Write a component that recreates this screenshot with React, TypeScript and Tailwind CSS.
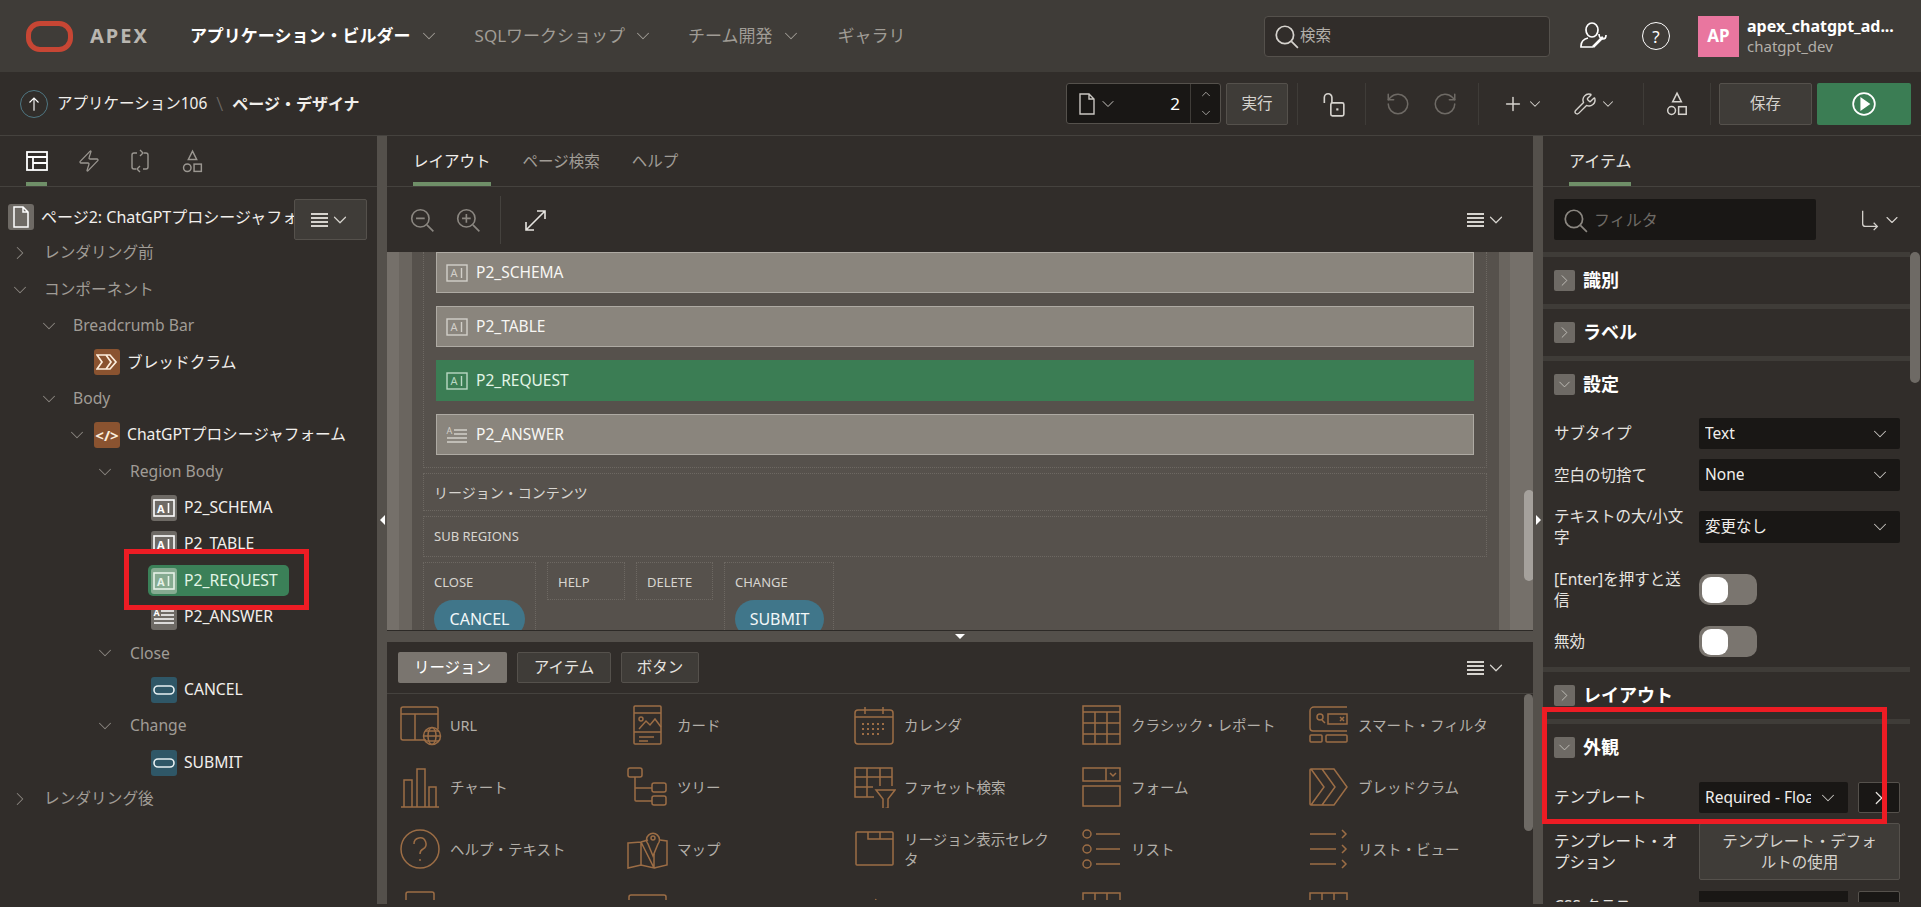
import type { ReactNode } from 'react';
import { ChevronDown, ChevronRight, ChevronUp, RotateCcw, RotateCw, Plus, Wrench, Zap } from 'lucide-react';

const brown = '#9c6d45';

function Svg({ children, size = 24, view = '0 0 24 24', stroke = 'currentColor', sw = 1.5, className = '' }: { children: ReactNode; size?: number; view?: string; stroke?: string; sw?: number; className?: string }) {
  return (
    <svg width={size} height={size} viewBox={view} fill="none" stroke={stroke} strokeWidth={sw} className={className}>
      {children}
    </svg>
  );
}

function SearchIcon({ className = '' }: { className?: string }) {
  return (
    <Svg size={26} className={className} sw={1.6}>
      <ellipse cx="11" cy="11" rx="8" ry="8" />
      <path d="M17 17l6 6" />
    </Svg>
  );
}

function MenuIcon() {
  return (
    <span className="flex items-center gap-[1px] text-[#d6d3ce]">
      <span className="flex w-[17px] flex-col gap-[2px]">
        <span className="h-[2px] bg-current" />
        <span className="h-[2px] bg-current" />
        <span className="h-[2px] bg-current" />
        <span className="h-[2px] bg-current" />
      </span>
      <ChevronDown size={22} strokeWidth={1.3} />
    </span>
  );
}

function ShapesIcon({ size = 26 }: { size?: number }) {
  return (
    <Svg size={size} sw={1.4}>
      <path d="M12 2l4 8H8z" />
      <circle cx="7" cy="18" r="3.6" />
      <rect x="13.5" y="14.5" width="7" height="7" />
    </Svg>
  );
}

function Divider() {
  return <span className="block h-[42px] w-px bg-[#3f3c38]" />;
}

function ItemGlyph({ light = false }: { light?: boolean }) {
  const c = light ? '#e6f2e8' : '#ffffff';
  return (
    <svg width="22" height="18" viewBox="0 0 22 18" fill="none" stroke={c} strokeWidth="1.6">
      <rect x="1" y="1" width="20" height="16" />
      <text x="4" y="13.5" fontSize="11" fontWeight="700" fill={c} stroke="none">A</text>
      <path d="M15.5 4v10" />
    </svg>
  );
}

function AreaGlyph() {
  return (
    <svg width="22" height="18" viewBox="0 0 22 18" fill="none" stroke="#fff" strokeWidth="1.5">
      <text x="0.5" y="8" fontSize="9" fontWeight="700" fill="#fff" stroke="none">A</text>
      <path d="M8 3h13M8 7h13M1 11h20M1 15h20" />
    </svg>
  );
}

function ButtonGlyph() {
  return (
    <svg width="22" height="10" viewBox="0 0 22 10" fill="none" stroke="#e8f1f3" strokeWidth="1.6">
      <rect x="1" y="1" width="20" height="8" rx="4" />
    </svg>
  );
}

function TreeBox({ className, children }: { className: string; children: ReactNode }) {
  return <span className={`flex h-[26px] w-[26px] shrink-0 items-center justify-center rounded-[3px] ${className}`}>{children}</span>;
}

function Twist({ open = true }: { open?: boolean }) {
  return (
    <span className="flex w-4 shrink-0 justify-center text-[#8b8781]">
      {open ? <ChevronDown size={22} strokeWidth={1.1} className="shrink-0" /> : <ChevronRight size={22} strokeWidth={1.1} className="shrink-0" />}
    </span>
  );
}

function Group({ label, className, gap, open = true }: { label: string; className: string; gap: string; open?: boolean }) {
  return (
    <div className={`flex h-[36.4px] items-center ${className} ${gap}`}>
      <Twist open={open} />
      <span className="text-[#a09c96]">{label}</span>
    </div>
  );
}

function Leaf({ label, glyph, box = 'bg-[#6e6a65]', pad = 'pl-[151px]' }: { label: string; glyph: ReactNode; box?: string; pad?: string }) {
  return (
    <div className={`flex h-[36.4px] items-center gap-[7px] ${pad}`}>
      <TreeBox className={box}>{glyph}</TreeBox>
      <span className="text-[#f1efec]">{label}</span>
    </div>
  );
}

function LeftPanel() {
  return (
    <aside className="flex w-[377px] shrink-0 flex-col overflow-hidden">
      <div className="flex h-[51px] shrink-0 items-center border-b border-[#45423e] pl-[26px]">
        <div className="flex h-full w-[51px] flex-col items-start pt-[15px]">
          <svg width="22" height="20" viewBox="0 0 22 20" fill="none" stroke="#fff" strokeWidth="1.8">
            <rect x="1" y="1" width="20" height="18" />
            <path d="M1 6h20M7 6v13M7 12h14" />
          </svg>
          <span className="mt-auto h-[4px] w-[21px] bg-[#6f8f68]" />
        </div>
        <div className="flex h-full w-[51px] items-center text-[#9b9791]">
          <Zap size={24} strokeWidth={1.3} />
        </div>
        <div className="flex h-full w-[52px] items-center text-[#9b9791]">
          <Svg size={24} sw={1.4}>
            <path d="M9 4H6a2 2 0 0 0-2 2v12a2 2 0 0 0 2 2h2M15 20h3a2 2 0 0 0 2-2V6a2 2 0 0 0-2-2h-2" />
            <path d="M12 1l3 3-3 3M12 17l-3 3 3 3" />
          </Svg>
        </div>
        <div className="flex h-full items-center text-[#9b9791]">
          <ShapesIcon size={25} />
        </div>
      </div>

      <div className="relative flex h-[48px] shrink-0 items-center pl-[8px] pt-[12px]">
        <span className="flex h-[26px] w-[26px] items-center justify-center rounded-[3px] bg-[#6e6a65]">
          <svg width="16" height="22" viewBox="0 0 16 22" fill="none" stroke="#fff" strokeWidth="1.5">
            <path d="M1 1h9l5 5v15H1zM10 1v5h5" />
          </svg>
        </span>
        <span className="ml-[7px] w-[253px] overflow-hidden whitespace-nowrap text-[16px] text-[#f1efec]">ページ2: ChatGPTプロシージャフォーム</span>
        <span className="absolute left-[294px] top-[12px] flex h-[41px] w-[73px] items-center justify-center rounded-[2px] border border-[#55514c] bg-[#3f3c38]">
          <MenuIcon />
        </span>
      </div>

      <div className="text-[15.7px] leading-none">
        <Group label="レンダリング前" open={false} className="pl-[12px]" gap="gap-[16px]" />
        <Group label="コンポーネント" className="pl-[12px]" gap="gap-[16px]" />
        <Group label="Breadcrumb Bar" className="pl-[41px]" gap="gap-[16px]" />
        <Leaf
          label="ブレッドクラム"
          pad="pl-[94px]"
          box="bg-[#8a5330]"
          glyph={
            <svg width="22" height="16" viewBox="0 0 22 16" fill="none" stroke="#fdeedd" strokeWidth="1.7">
              <path d="M1 1h9l5 7-5 7H1l5-7zM10 1h4l6 7-6 7h-4" />
            </svg>
          }
        />
        <Group label="Body" className="pl-[41px]" gap="gap-[16px]" />
        <div className="flex h-[36.4px] items-center pl-[69px]">
          <Twist />
          <TreeBox className="ml-[9px] bg-[#8a5330]">
            <span className="text-[15px] font-bold leading-none text-[#fdeedd]">&lt;/&gt;</span>
          </TreeBox>
          <span className="ml-[7px] text-[#f1efec]">ChatGPTプロシージャフォーム</span>
        </div>
        <Group label="Region Body" className="pl-[97px]" gap="gap-[17px]" />
        <Leaf label="P2_SCHEMA" glyph={<ItemGlyph />} />
        <Leaf label="P2_TABLE" glyph={<ItemGlyph />} />
        <div className="relative flex h-[36.4px] items-center pl-[148px]">
          <span className="absolute left-[124px] top-[-14px] h-[61px] w-[185px] border-[5px] border-[#ed1c24] bg-[#312d2a]" />
          <span className="relative flex h-[31px] w-[141px] items-center gap-[7px] rounded-[5px] bg-[#3b8058] pl-[3px]">
            <span className="flex h-[26px] w-[26px] items-center justify-center rounded-[3px] bg-[#86ab91]">
              <ItemGlyph light />
            </span>
            <span className="text-[#e2f5e6]">P2_REQUEST</span>
          </span>
        </div>
        <Leaf label="P2_ANSWER" glyph={<AreaGlyph />} />
        <Group label="Close" className="pl-[97px]" gap="gap-[17px]" />
        <Leaf label="CANCEL" box="bg-[#2f5767]" glyph={<ButtonGlyph />} />
        <Group label="Change" className="pl-[97px]" gap="gap-[17px]" />
        <Leaf label="SUBMIT" box="bg-[#2f5767]" glyph={<ButtonGlyph />} />
        <Group label="レンダリング後" open={false} className="pl-[12px]" gap="gap-[16px]" />
      </div>
    </aside>
  );
}

function Splitter({ dir }: { dir: 'left' | 'right' }) {
  return (
    <div className="flex w-[10px] shrink-0 items-start justify-center bg-[#54504b] pt-[379px]">
      {dir === 'left' ? (
        <span className="h-0 w-0 border-y-[5px] border-r-[5px] border-y-transparent border-r-white" />
      ) : (
        <span className="h-0 w-0 border-y-[5px] border-l-[5px] border-y-transparent border-l-white" />
      )}
    </div>
  );
}

function FormRow({ name, glyph, active = false }: { name: string; glyph: ReactNode; active?: boolean }) {
  return (
    <div
      className={
        active
          ? 'flex h-[41px] items-center gap-[8px] bg-[#3b7d54] pl-[10px] text-[15.5px] text-[#e2f5e6]'
          : 'flex h-[41px] items-center gap-[8px] border border-[#aeaaa3] bg-[#8a857d] pl-[9px] text-[15.5px] text-[#f7f6f3]'
      }
    >
      {glyph}
      <span>{name}</span>
    </div>
  );
}

function ItemMark({ color }: { color: string }) {
  return (
    <svg width="22" height="18" viewBox="0 0 22 18" fill="none" stroke={color} strokeWidth="1.4">
      <rect x="1" y="1" width="20" height="16" />
      <text x="4.5" y="13" fontSize="11" fill={color} stroke="none">A</text>
      <path d="M15.5 4v10" />
    </svg>
  );
}

function SlotBox({ label, className, children }: { label: string; className: string; children?: ReactNode }) {
  return (
    <div className={`shrink-0 border border-dotted border-[#6d6862] pl-[10px] ${className}`}>
      <div className="mt-[10px] text-[13px] leading-[18px] text-[#d8d5d0]">{label}</div>
      {children}
    </div>
  );
}

function CanvasPill({ label, className }: { label: string; className: string }) {
  return <div className={`mt-[9px] flex h-[38px] items-center justify-center rounded-full bg-[#40768a] text-[16px] text-[#f2f7f8] ${className}`}>{label}</div>;
}

function Canvas() {
  return (
    <div className="relative flex h-[378px] shrink-0 overflow-hidden bg-[#56514c]">
      <div className="flex w-[25px] shrink-0">
        <span className="w-[12px] bg-[#75706a]" />
        <span className="w-[13px] bg-[#6a655f]" />
      </div>
      <div className="min-w-0 flex-1 pl-[11px] pr-[12px]">
        <div className="border-x border-b border-dotted border-[#6d6862] px-[12px] pb-[12px]">
          <div className="flex flex-col gap-[13px]">
            <FormRow name="P2_SCHEMA" glyph={<ItemMark color="#d2cfc9" />} />
            <FormRow name="P2_TABLE" glyph={<ItemMark color="#d2cfc9" />} />
            <FormRow name="P2_REQUEST" active glyph={<ItemMark color="#b9d8c3" />} />
            <FormRow
              name="P2_ANSWER"
              glyph={
                <svg width="22" height="18" viewBox="0 0 22 18" fill="none" stroke="#d2cfc9" strokeWidth="1.4">
                  <text x="0.5" y="8" fontSize="9" fill="#d2cfc9" stroke="none">A</text>
                  <path d="M8 4h13M8 8h13M1 12h20M1 16h20" />
                </svg>
              }
            />
          </div>
        </div>
        <div className="mt-[5px] flex h-[38px] items-center border border-dotted border-[#6d6862] pl-[10px] text-[14px] text-[#d8d5d0]">リージョン・コンテンツ</div>
        <div className="mt-[5px] flex h-[41px] items-center border border-dotted border-[#6d6862] pl-[10px] text-[13px] text-[#d8d5d0]">SUB REGIONS</div>
        <div className="mt-[5px] flex items-start">
          <SlotBox label="CLOSE" className="h-[80px] w-[113px]">
            <CanvasPill label="CANCEL" className="w-[91px]" />
          </SlotBox>
          <SlotBox label="HELP" className="ml-[11px] h-[38px] w-[78px]" />
          <SlotBox label="DELETE" className="ml-[11px] h-[38px] w-[77px]" />
          <SlotBox label="CHANGE" className="ml-[11px] h-[80px] w-[110px]">
            <CanvasPill label="SUBMIT" className="w-[89px]" />
          </SlotBox>
        </div>
      </div>
      <div className="flex w-[34px] shrink-0">
        <span className="w-[11px] bg-[#6a655f]" />
        <span className="w-[23px] bg-[#75706a]" />
      </div>
      <span className="absolute left-[1137px] top-[238px] h-[91px] w-[10px] rounded-full bg-[#a5a19c]" />
    </div>
  );
}

const g = { stroke: brown, strokeWidth: 1.5, fill: 'none' };

function Glyph({ children }: { children: ReactNode }) {
  return (
    <svg width="42" height="42" viewBox="0 0 42 42" {...g} className="shrink-0">
      {children}
    </svg>
  );
}

const gallery: { label?: string; icon: ReactNode }[] = [
  { label: 'URL', icon: <Glyph><path d="M26 36H3a2 2 0 0 1-2-2V5a2 2 0 0 1 2-2h33a2 2 0 0 1 2 2v20M1 10h37M15 10v26" /><circle cx="32" cy="32" r="8.5" /><ellipse cx="32" cy="32" rx="4" ry="8.5" /><path d="M23.5 32h17M25 27h14M25 37h14" /></Glyph> },
  { label: 'カード', icon: <Glyph><rect x="7" y="2" width="27" height="38" rx="1" /><path d="M7 9h27M7 28h27M12 33h15M12 37h9M12 25l7-8 4 4 5-6 6 8" /><circle cx="14" cy="15" r="2" /></Glyph> },
  { label: 'カレンダ', icon: <Glyph><rect x="1" y="6" width="38" height="34" rx="3" /><path d="M1 13h38M11 3v7M29 3v7" /><path d="M8 20h24M8 25h24M8 30h18" strokeDasharray="2 3" strokeWidth="2" /></Glyph> },
  { label: 'クラシック・レポート', icon: <Glyph><rect x="2" y="2" width="37" height="38" /><path d="M2 8h37M2 19h37M2 30h37M14 8v32M26 8v32" /></Glyph> },
  { label: 'スマート・フィルタ', icon: <Glyph><path d="M39 3H6a4 4 0 0 0-4 4v17a3 3 0 0 0 3 3h34" /><circle cx="12" cy="13" r="3" /><path d="M14 16l3 3" /><rect x="20" y="10" width="19" height="10" /><path d="M32 13l4 4m0-4l-4 4" /><rect x="2" y="31" width="12" height="7" rx="1" /><rect x="18" y="31" width="21" height="7" rx="1" /></Glyph> },
  { label: 'チャート', icon: <Glyph><path d="M1 41h38M4 41V14h8v27M17 41V3h8v38M29 41V21h7v20" /></Glyph> },
  { label: 'ツリー', icon: <Glyph><rect x="1" y="2" width="14" height="9" rx="2" /><rect x="25" y="17" width="14" height="9" rx="2" /><rect x="25" y="30" width="14" height="9" rx="2" /><path d="M8 11v23a1 1 0 0 0 1 1h16M8 22h17" /></Glyph> },
  { label: 'ファセット検索', icon: <Glyph><path d="M20 31H1V2h37v18M1 11h37M1 21h18M13 2v29M26 2v18M22 24h19L34 33v9l-5 1V33z" /></Glyph> },
  { label: 'フォーム', icon: <Glyph><rect x="2" y="2" width="37" height="13" /><path d="M25 2v13M29 7l3 3 3-3" /><rect x="2" y="20" width="37" height="20" /></Glyph> },
  { label: 'ブレッドクラム', icon: <Glyph><path d="M3 3h23l13 18-13 18H3a1 1 0 0 1-1-1V4a1 1 0 0 1 1-1zM3 3l13 18L3 39M14 3l13 18-13 18" /></Glyph> },
  { label: 'ヘルプ・テキスト', icon: <Glyph><circle cx="20" cy="21" r="19" /><path d="M14 16a6 6 0 1 1 9 5c-2 1-3 3-3 5" /><path d="M20 31v2" /></Glyph> },
  { label: 'マップ', icon: <Glyph><path d="M1 15l13-1 13 26L14 37 1 40zM14 14v23M27 40V26M27 40l13-3V13l-7-1M21 12l-7 2" /><path d="M26 28l-5-12a6.500 6.500 0 1 1 10 0z" /><circle cx="26" cy="10" r="2" /></Glyph> },
  { label: 'リージョン表示セレクタ', icon: <Glyph><rect x="2" y="4" width="37" height="33" rx="1" /><path d="M14 4v7h25M26 4v7" /></Glyph> },
  { label: 'リスト', icon: <Glyph><circle cx="6" cy="6" r="4" /><circle cx="6" cy="21" r="4" /><circle cx="6" cy="36" r="4" /><path d="M15 6h24M15 21h24M15 36h24" /></Glyph> },
  { label: 'リスト・ビュー', icon: <Glyph><path d="M2 6h26M2 21h26M2 36h26M34 2l4 4-4 4M34 17l4 4-4 4M34 32l4 4-4 4" /></Glyph> },
  { icon: <Glyph><path d="M6 20V4a2 2 0 0 1 2-2h24a2 2 0 0 1 2 2v16" /></Glyph> },
  { icon: <Glyph><path d="M2 20V7a2 2 0 0 1 2-2h33a2 2 0 0 1 2 2v13" /></Glyph> },
  { icon: <Glyph><path d="M20 14l2-5" /></Glyph> },
  { icon: <Glyph><path d="M2 20V3h37v17M14 3v17M26 3v17" /></Glyph> },
  { icon: <Glyph><path d="M2 20V3h37v17M14 3v17M26 3v17" /></Glyph> },
];

function Center() {
  return (
    <main className="flex w-[1146px] shrink-0 flex-col">
      <div className="flex h-[51px] shrink-0 items-stretch gap-[32px] border-b border-[#45423e] pl-[26px] text-[15.5px] text-[#a09c96]">
        <span className="flex items-center border-b-[4px] border-[#6f8f68] pt-[6px] text-[#f1efec]">レイアウト</span>
        <span className="flex items-center pt-[2px]">ページ検索</span>
        <span className="flex items-center pt-[2px]">ヘルプ</span>
      </div>
      <div className="flex h-[65px] shrink-0 items-center pl-[22px] pr-[26px] text-[#8b8781]">
        <Svg size={26} sw={1.5}>
          <circle cx="10.500" cy="10.500" r="8" />
          <path d="M6.500 10.500h8M16.500 16.500l6 6" />
        </Svg>
        <span className="ml-[20px]">
          <Svg size={26} sw={1.5}>
            <circle cx="10.500" cy="10.500" r="8" />
            <path d="M6.500 10.500h8M10.500 6.500v8M16.500 16.500l6 6" />
          </Svg>
        </span>
        <span className="ml-[19px] h-[48px] w-px bg-[#45423e]" />
        <span className="ml-[22px] text-[#e6e4e0]">
          <Svg size={24} sw={1.6}>
            <path d="M14 3h8v8M22 3L3 22M3 14v8h8" />
          </Svg>
        </span>
        <span className="ml-auto"><MenuIcon /></span>
      </div>
      <Canvas />
      <div className="relative flex h-[12px] shrink-0 justify-center border-t border-[#2d2a27] bg-[#54504b] pt-[3px]">
        <span className="h-0 w-0 border-x-[5px] border-t-[5px] border-x-transparent border-t-white" />
      </div>
      <div className="flex h-[52px] shrink-0 items-center gap-[10px] border-b border-[#45423e] pl-[11px] pr-[26px] text-[15.5px] text-[#e6e4e0]">
        <span className="flex h-[31px] w-[109px] items-center justify-center rounded-[2px] bg-[#7a756f] text-white">リージョン</span>
        <span className="flex h-[31px] w-[94px] items-center justify-center rounded-[2px] border border-[#55514c] bg-[#3f3c38]">アイテム</span>
        <span className="flex h-[31px] w-[78px] items-center justify-center rounded-[2px] border border-[#55514c] bg-[#3f3c38]">ボタン</span>
        <span className="ml-auto"><MenuIcon /></span>
      </div>
      <div className="flex min-h-0 flex-1">
        <div className="grid h-[206px] w-[1137px] grid-cols-[227px_227px_227px_227px_1fr] auto-rows-[62px] overflow-hidden pl-[13px]">
          {gallery.map((item, i) => (
            <div key={i} className="flex items-center gap-[8px] text-[14.5px] leading-[20px] text-[#b3afa9]">
              {item.icon}
              {item.label && <span className="max-w-[150px]">{item.label}</span>}
            </div>
          ))}
        </div>
        <div className="w-[9px] shrink-0">
          <div className="h-[137px] rounded-full bg-[#6e6a65]" />
        </div>
      </div>
    </main>
  );
}

function SectionHead({ title, open = false }: { title: string; open?: boolean }) {
  return (
    <div className="flex h-[47px] items-center gap-[8px] pl-[11px]">
      <span className="flex h-[21px] w-[21px] items-center justify-center rounded-[2px] bg-[#6e6a65] text-[#c9c6c1]">
        {open ? <ChevronDown size={19} strokeWidth={1.1} /> : <ChevronRight size={19} strokeWidth={1.1} />}
      </span>
      <span className="text-[18px] font-bold text-white">{title}</span>
    </div>
  );
}

function Strip() {
  return <div className="h-[5px] bg-[#3f3c38]" />;
}

function Prop({ label, mt, h, children }: { label: string; mt: string; h: string; children: ReactNode }) {
  return (
    <div className={`flex items-center pl-[11px] ${mt} ${h}`}>
      <span className="w-[145px] shrink-0 pr-[9px] text-[15.5px] leading-[21px] text-[#e6e4e0]">{label}</span>
      {children}
    </div>
  );
}

function Select({ value, className = 'w-[201px]' }: { value: string; className?: string }) {
  return (
    <span className={`flex h-full items-center justify-between rounded-[2px] bg-[#191715] pl-[6px] pr-[9px] text-[15.5px] text-[#f1efec] ${className}`}>
      <span className="overflow-hidden whitespace-nowrap">{value}</span>
      <ChevronDown size={22} strokeWidth={1.1} className="ml-[6px] shrink-0 text-[#c9c6c1]" />
    </span>
  );
}

function Toggle() {
  return (
    <span className="flex h-full w-[58px] items-center rounded-[10px] bg-[#7a756f] pl-[3px]">
      <span className="h-[26px] w-[26px] rounded-[9px] bg-white" />
    </span>
  );
}

function RightPanel() {
  return (
    <aside className="flex w-[377px] shrink-0 flex-col">
      <div className="flex h-[51px] shrink-0 items-stretch border-b border-[#45423e] pl-[26px] text-[16px] text-[#e6e4e0]">
        <span className="flex items-center border-b-[4px] border-[#6f8f68] pt-[4px]">アイテム</span>
      </div>
      <div className="flex h-[65px] shrink-0 items-center pl-[11px] pr-[18px]">
        <span className="flex h-[41px] w-[262px] items-center gap-[6px] rounded-[2px] bg-[#191715] pl-[8px] text-[16px] text-[#6e6a65]">
          <SearchIcon className="text-[#8b8781]" />
          フィルタ
        </span>
        <span className="ml-auto flex items-center gap-[1px] text-[#d6d3ce]">
          <Svg size={22} sw={1.4}>
            <path d="M4 2v14a3 3 0 0 0 3 3h13M16 15l4 4-4 4" />
          </Svg>
          <ChevronDown size={20} strokeWidth={1.3} />
        </span>
      </div>
      <div className="flex min-h-0 flex-1">
        <div className="h-[650px] w-[367px] shrink-0 overflow-hidden">
          <Strip />
          <SectionHead title="識別" />
          <Strip />
          <SectionHead title="ラベル" />
          <Strip />
          <SectionHead title="設定" open />
          <Prop label="サブタイプ" mt="mt-[10px]" h="h-[31px]"><Select value="Text" /></Prop>
          <Prop label="空白の切捨て" mt="mt-[10px]" h="h-[32px]"><Select value="None" /></Prop>
          <Prop label="テキストの大/小文字" mt="mt-[20px]" h="h-[32px]"><Select value="変更なし" /></Prop>
          <Prop label="[Enter]を押すと送信" mt="mt-[31px]" h="h-[31px]"><Toggle /></Prop>
          <Prop label="無効" mt="mt-[21px]" h="h-[31px]"><Toggle /></Prop>
          <div className="h-[10px]" />
          <Strip />
          <SectionHead title="レイアウト" />
          <Strip />
          <SectionHead title="外観" open />
          <Prop label="テンプレート" mt="mt-[11px]" h="h-[31px]">
            <Select value="Required - Floating" className="w-[149px]" />
            <span className="ml-[10px] flex h-full w-[42px] items-center justify-center rounded-[2px] border border-[#55514c] bg-[#191715] text-[#e6e4e0]">
              <ChevronRight size={22} strokeWidth={1.3} />
            </span>
          </Prop>
          <Prop label="テンプレート・オプション" mt="mt-[10px]" h="h-[57px]">
            <span className="flex h-full w-[201px] items-center justify-center rounded-[2px] border border-[#55514c] bg-[#3f3c38] px-[16px] text-center text-[15.5px] leading-[21px] text-[#d6d3ce]">テンプレート・デフォルトの使用</span>
          </Prop>
          <Prop label="CSS クラス" mt="mt-[11px]" h="h-[31px]">
            <span className="h-full w-[149px] bg-[#191715]" />
            <span className="ml-[10px] h-full w-[42px] rounded-[2px] border border-[#55514c] bg-[#191715]" />
          </Prop>
        </div>
        <div className="w-[10px] shrink-0">
          <div className="h-[131px] rounded-full bg-[#6e6a65]" />
        </div>
      </div>
    </aside>
  );
}

function TopBar() {
  return (
    <header className="flex h-[72px] shrink-0 items-center bg-[#3f3c38] pl-[26px]">
      <span className="h-[31px] w-[47px] rounded-[14px] border-[5px] border-[#c74634]" />
      <span className="ml-[17px] text-[20px] font-bold tracking-[2px] text-[#b9b6b0]">APEX</span>
      <span className="ml-[41px] text-[17px] font-bold text-white">アプリケーション・ビルダー</span>
      <ChevronDown size={22} strokeWidth={1.1} className="ml-[7px] text-[#a09c96]" />
      <span className="ml-[35px] text-[17px] text-[#a09c96]">SQLワークショップ</span>
      <ChevronDown size={22} strokeWidth={1.1} className="ml-[7px] text-[#a09c96]" />
      <span className="ml-[34px] text-[17px] text-[#a09c96]">チーム開発</span>
      <ChevronDown size={22} strokeWidth={1.1} className="ml-[7px] text-[#a09c96]" />
      <span className="ml-[36px] text-[17px] text-[#a09c96]">ギャラリ</span>

      <span className="ml-auto flex h-[41px] w-[286px] items-center gap-[1px] rounded-[4px] border border-[#55514c] bg-[#312d2a] pl-[8px] text-[15.5px] text-[#b3afa9]">
        <SearchIcon className="text-[#d6d3ce]" />
        検索
      </span>
      <span className="ml-[28px] text-white">
        <Svg size={30} view="0 0 30 30" sw={1.7}>
          <ellipse cx="14" cy="9" rx="6" ry="7" />
          <path d="M10 17c-4 1-7 4-7 8v1h12" />
          <path d="M15 26l10-10" strokeWidth="2.6" />
          <path d="M21 13c0 3 2 5 4 5 2 0 3-2 3-4" />
        </Svg>
      </span>
      <span className="ml-[34px] flex h-[28px] w-[28px] items-center justify-center rounded-full border-[1.8px] border-white text-[17px] leading-none text-white">?</span>
      <span className="ml-[28px] flex h-[41px] w-[41px] items-center justify-center bg-[#e9769f] text-[17px] font-bold text-white">AP</span>
      <span className="ml-[8px] flex w-[174px] flex-col text-[15px] leading-[20px]">
        <span className="text-[16px] font-bold text-white">apex_chatgpt_ad...</span>
        <span className="text-[#b3afa9]">chatgpt_dev</span>
      </span>
    </header>
  );
}

function ToolBar() {
  return (
    <div className="flex h-[64px] shrink-0 items-center border-b border-[#45423e] pl-[20px] pr-[10px]">
      <span className="flex h-[28px] w-[28px] items-center justify-center rounded-full border border-[#4f7783] text-white">
        <Svg size={18} sw={1.5}><path d="M12 21V4M6 10l6-6 6 6" /></Svg>
      </span>
      <span className="ml-[9px] text-[15.5px] text-[#f1efec]">アプリケーション106</span>
      <span className="ml-[9px] text-[20px] font-light text-[#6e6a65]">\</span>
      <span className="ml-[9px] text-[16px] font-bold text-[#f1efec]">ページ・デザイナ</span>

      <span className="ml-auto flex h-[41px] w-[155px] items-center rounded-[3px] border border-[#55514c] bg-[#191715] pl-[12px] text-[#c9c6c1]">
        <svg width="16" height="22" viewBox="0 0 16 22" fill="none" stroke="currentColor" strokeWidth="1.4"><path d="M1 1h9l5 5v15H1zM10 1v5h5" /></svg>
        <ChevronDown size={20} strokeWidth={1.2} className="ml-[3px]" />
        <span className="ml-auto pr-[10px] text-[17px] text-white">2</span>
        <span className="flex h-full w-[30px] flex-col items-center justify-center gap-[5px] border-l border-[#3f3c38]">
          <ChevronUp size={14} strokeWidth={1.3} />
          <ChevronDown size={14} strokeWidth={1.3} />
        </span>
      </span>
      <span className="ml-[5px] flex h-[42px] w-[62px] items-center justify-center rounded-[2px] border border-[#55514c] bg-[#3f3c38] text-[15.5px] text-[#d6d3ce]">実行</span>
      <span className="ml-[9px]"><Divider /></span>
      <span className="ml-[22px] text-[#d6d3ce]">
        <Svg size={26} sw={1.5}>
          <rect x="10" y="11" width="12" height="12" rx="1.500" />
          <path d="M4 11V6a3.500 3.500 0 0 1 7 0v5" />
          <path d="M16 16v2" strokeWidth="2" />
        </Svg>
      </span>
      <span className="ml-[19px]"><Divider /></span>
      <RotateCcw size={26} strokeWidth={1.4} className="ml-[19px] text-[#6e6a65]" />
      <RotateCw size={26} strokeWidth={1.4} className="ml-[21px] text-[#6e6a65]" />
      <span className="ml-[20px]"><Divider /></span>
      <Plus size={22} strokeWidth={1.6} className="ml-[23px] text-[#d6d3ce]" />
      <ChevronDown size={18} strokeWidth={1.4} className="ml-[2px] text-[#d6d3ce]" />
      <Wrench size={24} strokeWidth={1.4} className="ml-[29px] text-[#d6d3ce]" />
      <ChevronDown size={18} strokeWidth={1.4} className="ml-[2px] text-[#d6d3ce]" />
      <span className="ml-[26px]"><Divider /></span>
      <span className="ml-[20px] text-[#d6d3ce]"><ShapesIcon size={26} /></span>
      <span className="ml-[20px]"><Divider /></span>
      <span className="ml-[8px] flex h-[42px] w-[93px] items-center justify-center rounded-[2px] border border-[#55514c] bg-[#3f3c38] text-[15.5px] text-[#d6d3ce]">保存</span>
      <span className="ml-[5px] flex h-[42px] w-[94px] items-center justify-center rounded-[2px] bg-[#3b7d54] text-white">
        <Svg size={26} sw={1.6}>
          <circle cx="12" cy="12" r="10" />
          <path d="M9.500 7l7 5-7 5z" fill="currentColor" />
        </Svg>
      </span>
    </div>
  );
}

export default function App() {
  return (
    <div className="relative h-[907px] w-[1921px] overflow-hidden bg-[#312d2a] font-['Noto_Sans','Noto_Sans_CJK_JP',sans-serif]">
      <TopBar />
      <ToolBar />
      <div className="flex h-[768px]">
        <LeftPanel />
        <Splitter dir="left" />
        <Center />
        <Splitter dir="right" />
        <RightPanel />
      </div>
      <div className="pointer-events-none absolute left-[1542px] top-[707px] h-[117px] w-[345px] border-[5px] border-[#ed1c24]" />
    </div>
  );
}
